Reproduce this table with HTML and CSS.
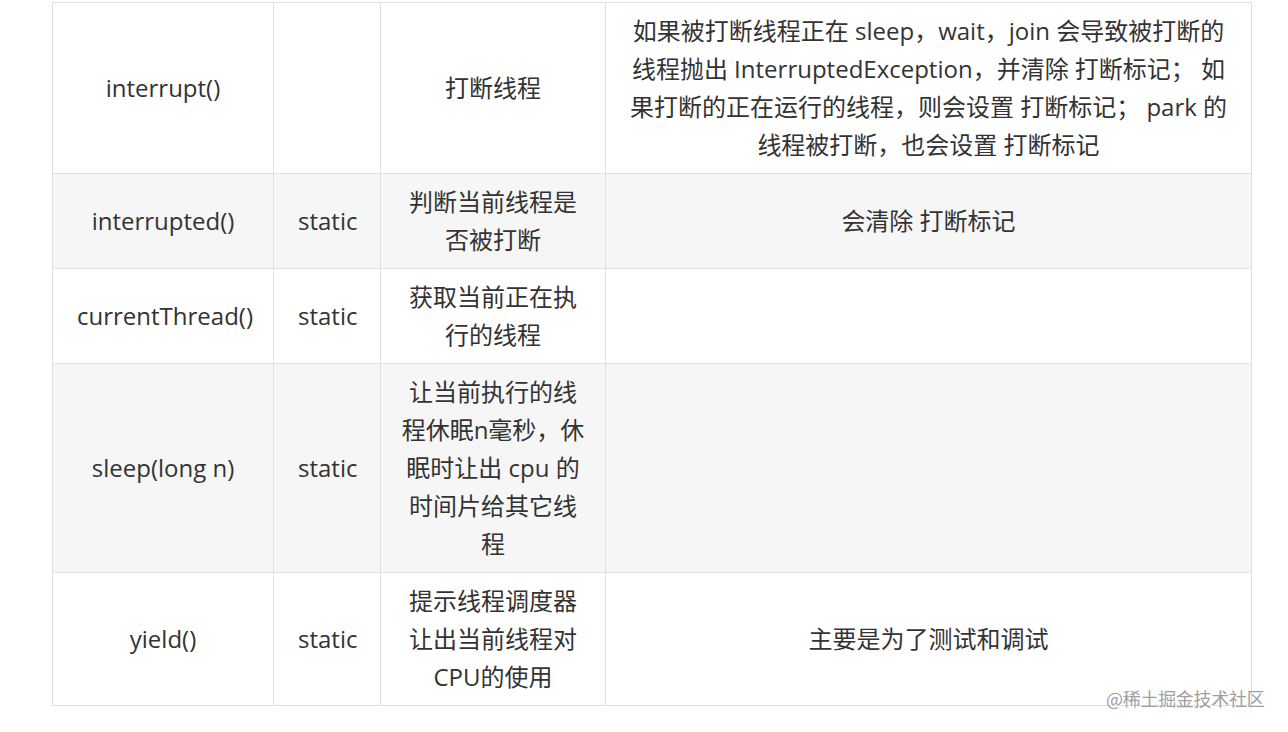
FILE: index.html
```html
<!DOCTYPE html>
<html lang="zh-CN">
<head>
<meta charset="utf-8">
<title>Thread methods</title>
<link rel="stylesheet" href="styles.css">
</head>
<body>
<div class="page">
  <table class="methods">
    <colgroup>
      <col class="c1"><col class="c2"><col class="c3"><col class="c4">
    </colgroup>
    <tbody>
      <tr>
        <td>interrupt()</td>
        <td></td>
        <td>打断线程</td>
        <td>如果被打断线程正在 sleep，wait，join 会导致被打断的线程抛出 InterruptedException，并清除 打断标记； 如果打断的正在运行的线程，则会设置 打断标记； park 的线程被打断，也会设置 打断标记</td>
      </tr>
      <tr class="alt">
        <td>interrupted()</td>
        <td>static</td>
        <td>判断当前线程是否被打断</td>
        <td>会清除 打断标记</td>
      </tr>
      <tr>
        <td>currentThread()</td>
        <td>static</td>
        <td>获取当前正在执行的线程</td>
        <td></td>
      </tr>
      <tr class="alt">
        <td>sleep(long n)</td>
        <td>static</td>
        <td>让当前执行的线程休眠n毫秒，休眠时让出 cpu 的时间片给其它线程</td>
        <td></td>
      </tr>
      <tr>
        <td>yield()</td>
        <td>static</td>
        <td>提示线程调度器让出当前线程对CPU的使用</td>
        <td>主要是为了测试和调试</td>
      </tr>
    </tbody>
  </table>
  <div class="watermark">@稀土掘金技术社区</div>
</div>
</body>
</html>
```
FILE: styles.css
```css
html, body {
  margin: 0;
  padding: 0;
  background: #fff;
}
.page {
  position: relative;
  width: 1288px;
  height: 732px;
  padding: 2px 0 0 52px;
  box-sizing: border-box;
  overflow: hidden;
}
.methods {
  border-collapse: collapse;
  table-layout: fixed;
  width: 1199px;
  font-family: "Open Sans", "Noto Sans CJK SC", sans-serif;
  font-size: 24px;
  line-height: 38px;
  color: #333;
}
.c1 { width: 221px; }
.c2 { width: 107px; }
.c3 { width: 225px; }
.c4 { width: 646px; }
.methods td {
  border: 1px solid #e0e0e0;
  padding: 9px 24px;
  text-align: center;
  vertical-align: middle;
}
.methods td:nth-child(3) { padding: 9px 20px; }
.methods td:nth-child(4) { padding: 9px 20px; }
.methods tr.alt td {
  background: #f6f6f6;
}
.watermark {
  position: absolute;
  left: 1106px;
  top: 686px;
  font-family: "Noto Sans CJK SC", sans-serif;
  font-size: 18px;
  line-height: 24px;
  color: #a0a0a0;
  letter-spacing: -0.3px;
}
```
